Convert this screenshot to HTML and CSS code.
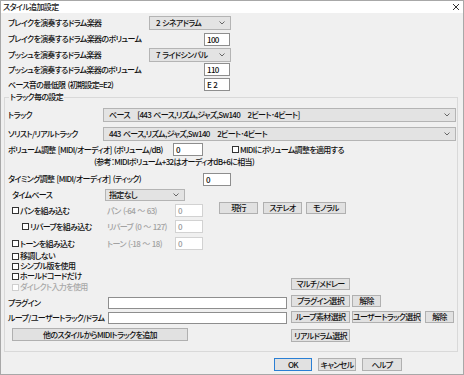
FILE: index.html
```html
<!DOCTYPE html>
<html lang="ja">
  <head>
    <meta charset="UTF-8" />
    <title>スタイル追加設定</title>
    <link rel="stylesheet" href="styles.css">
  </head>
  <body>
    <div class="window">
      <div class="titlebar">
        <span class="title">スタイル追加設定</span>
        <svg class="close" width="8" height="8" viewBox="0 0 8 8"><path d="M1 1 L7 7 M7 1 L1 7" stroke="#333" stroke-width="1" fill="none"/></svg>
      </div>

      <div class="top">
        <div class="row h16">
          <span class="lbl">ブレイクを演奏するドラム楽器</span>
          <span class="select drum">2 シネアドラム<svg class="chev" width="6" height="4" viewBox="0 0 6 4"><path d="M0.5 0.5 L3 3 L5.5 0.5" stroke="#666" fill="none"/></svg></span>
        </div>
        <div class="row h16">
          <span class="lbl">ブレイクを演奏するドラム楽器のボリューム</span>
          <span class="input small">100</span>
        </div>
        <div class="row h15">
          <span class="lbl">プッシュを演奏するドラム楽器</span>
          <span class="select drum">7 ライドシンバル<svg class="chev" width="6" height="4" viewBox="0 0 6 4"><path d="M0.5 0.5 L3 3 L5.5 0.5" stroke="#666" fill="none"/></svg></span>
        </div>
        <div class="row h15">
          <span class="lbl">プッシュを演奏するドラム楽器のボリューム</span>
          <span class="input small">110</span>
        </div>
        <div class="row h15">
          <span class="lbl">ベース音の最低限 (初期設定=E2)</span>
          <span class="input small">E 2</span>
        </div>
      </div>

      <fieldset class="group">
        <legend>トラック毎の設定</legend>

        <div class="row h15">
          <span class="lbl w95">トラック</span>
          <span class="select wide">ベース　[443 ベース,リズム,ジャズ,Sw140　2ビート･4ビート]<svg class="chev" width="6" height="4" viewBox="0 0 6 4"><path d="M0.5 0.5 L3 3 L5.5 0.5" stroke="#666" fill="none"/></svg></span>
        </div>
        <div class="row h15 mt4">
          <span class="lbl w95">ソリスト/リアルトラック</span>
          <span class="select wide">443 ベース,リズム,ジャズ,Sw140　2ビート･4ビート<svg class="chev" width="6" height="4" viewBox="0 0 6 4"><path d="M0.5 0.5 L3 3 L5.5 0.5" stroke="#666" fill="none"/></svg></span>
        </div>
        <div class="row h15 mt1">
          <span class="lbl w165">ボリューム調整 [MIDI/オーディオ] (ボリューム/dB)</span>
          <span class="input w30">0</span>
          <span class="check midi"><i class="box"></i>MIDIにボリューム調整を適用する</span>
        </div>
        <div class="row h10 note">(参考：MIDIボリューム+32はオーディオdB+6に相当)</div>
        <div class="row h16 mt4">
          <span class="lbl w195">タイミング調整 [MIDI/オーディオ] (ティック)</span>
          <span class="input w28">0</span>
        </div>
        <div class="row h14 mt1">
          <span class="lbl w97 in4">タイムベース</span>
          <span class="select base">指定なし<svg class="chev" width="6" height="4" viewBox="0 0 6 4"><path d="M0.5 0.5 L3 3 L5.5 0.5" stroke="#666" fill="none"/></svg></span>
        </div>

        <div class="row h15 mt1">
          <span class="check col1 in4"><i class="box"></i>パンを組み込む</span>
          <span class="dim col2">パン (-64 ～ 63)</span>
          <span class="input dis w28">0</span>
          <span class="btn w39 ml16 up">現行</span>
          <span class="btn w39 ml5 up">ステレオ</span>
          <span class="btn w40 ml4 up">モノラル</span>
        </div>
        <div class="row h15 mt1">
          <span class="check col1 in14"><i class="box"></i>リバーブを組み込む</span>
          <span class="dim col2">リバーブ (0 ～ 127)</span>
          <span class="input dis w28">0</span>
        </div>
        <div class="row h15 mt2">
          <span class="check col1 in4"><i class="box"></i>トーンを組み込む</span>
          <span class="dim col2">トーン (-18 ～ 18)</span>
          <span class="input dis w28">0</span>
        </div>

        <div class="lower">
          <div class="left">
            <div class="row h10"><span class="check in4"><i class="box"></i>移調しない</span></div>
            <div class="row h10"><span class="check in4"><i class="box"></i>シンプル版を使用</span></div>
            <div class="row h10"><span class="check in4"><i class="box"></i>ホールドコードだけ</span></div>
            <div class="row h12"><span class="check in4 off"><i class="box"></i>ダイレクト入力を使用</span></div>
            <div class="row h14 mt3">
              <span class="lbl w100">プラグイン</span>
              <span class="input grow"></span>
            </div>
            <div class="row h14 mt1">
              <span class="lbl w100">ループ/ユーザートラック/ドラム</span>
              <span class="input grow"></span>
            </div>
            <div class="row h15 mt2">
              <span class="btn other">他のスタイルからMIDIトラックを追加</span>
            </div>
          </div>
          <div class="right">
            <div class="btnrow first"><span class="btn w59">マルチ/メドレー</span></div>
            <div class="btnrow mt5"><span class="btn w59">プラグイン選択</span><span class="btn w29 ml2">解除</span></div>
            <div class="btnrow mt4"><span class="btn w59">ループ素材選択</span><span class="btn w69 ml2">ユーザートラック選択</span><span class="btn w29 ml4">解除</span></div>
            <div class="btnrow mt6"><span class="btn w59 h13">リアルドラム選択</span></div>
          </div>
        </div>
      </fieldset>

      <div class="actions">
        <span class="btn w38 ok">OK</span>
        <span class="btn w38 ml6">キャンセル</span>
        <span class="btn w40 ml6">ヘルプ</span>
      </div>
    </div>
  </body>
</html>
```

FILE: styles.css
```css
* {
  box-sizing: border-box;
}

html,
body {
  margin: 0;
  padding: 0;
}

body {
  font-family: "Noto Sans CJK JP", "Noto Sans", sans-serif;
  font-size: 8px;
  font-weight: 500;
  line-height: 10px;
  font-feature-settings: "palt";
  letter-spacing: -0.65px;
  word-spacing: 1px;
  color: #111;
  background: #fff;
}

.window {
  width: 464px;
  height: 375px;
  border: 1px solid #a8a8a8;
  background: #f0f0f0;
}

.titlebar {
  height: 12px;
  background: #fff;
  display: flex;
  align-items: center;
  justify-content: space-between;
  padding: 0 3px 0 2px;
  color: #222;
}

.close {
  display: block;
}

.top {
  width: 223px;
  margin-left: 7px;
  padding-top: 2px;
}

.row {
  display: flex;
  align-items: center;
  white-space: nowrap;
}

.top .row {
  justify-content: space-between;
}

.h10 { height: 10px; }
.h12 { height: 12px; }
.h14 { height: 14px; }
.h15 { height: 15px; }
.h16 { height: 16px; }

.mt1 { margin-top: 1px; }
.mt2 { margin-top: 2px; }
.mt3 { margin-top: 3px; }
.mt4 { margin-top: 4px; }
.mt5 { margin-top: 5px; }
.mt6 { margin-top: 6px; }

.ml2 { margin-left: 2px; }
.ml4 { margin-left: 4px; }
.ml5 { margin-left: 5px; }
.ml6 { margin-left: 6px; }
.ml16 { margin-left: 16px; }

.in4 { padding-left: 4px; }
.in14 { padding-left: 14px; }

.lbl {
  flex: none;
}

.w28 { width: 28px; }
.w29 { width: 29px; }
.w30 { width: 30px; }
.w38 { width: 38px; }
.w39 { width: 39px; }
.w40 { width: 40px; }
.w59 { width: 59px; }
.w69 { width: 69px; }
.w95 { width: 95px; }
.w97 { width: 97px; }
.w100 { width: 100px; }
.w165 { width: 165px; }
.w195 { width: 195px; }

.select {
  height: 14px;
  border: 1px solid #b4b4b4;
  background: #e3e3e3;
  display: flex;
  align-items: center;
  justify-content: space-between;
  padding: 0 5px 0 5px;
}

.chev {
  flex: none;
  display: block;
}

.select.drum {
  width: 82px;
  padding-left: 6px;
}

.select.wide {
  flex: 1;
}

.select.base {
  width: 80px;
  height: 12px;
  padding-left: 3px;
}

.input {
  height: 13px;
  border: 1px solid #8e8e8e;
  background: #fff;
  padding-left: 2px;
  line-height: 11px;
}

.input.small {
  width: 26px;
  margin-right: 1px;
}

.input.dis {
  border-color: #d2d2d2;
  color: #9a9a9a;
}

.input.grow {
  flex: 1;
  height: 12px;
}

.check {
  display: flex;
  align-items: center;
}

.box {
  width: 7px;
  height: 7px;
  border: 1px solid #333;
  background: #fff;
  margin-right: 1px;
  flex: none;
}

.check.off {
  color: #a8a8a8;
}

.check.off .box {
  border-color: #cfcfcf;
}

.check.midi {
  margin-left: 29px;
}

.note {
  padding-left: 86px;
}

.col1 {
  width: 99px;
}

.col2 {
  width: 68px;
}

.dim {
  color: #a2a2a2;
}

.btn {
  height: 12px;
  border: 1px solid #b0b0b0;
  background: #e1e1e1;
  display: flex;
  align-items: center;
  justify-content: center;
  flex: none;
  white-space: nowrap;
}

.btn.up {
  align-self: flex-start;
  margin-top: -1px;
}

.btn.h13 {
  height: 13px;
}

.btn.other {
  width: 176px;
  height: 13px;
  margin-left: 4px;
}

.group {
  margin: 0 5px 0 3px;
  padding: 5px 1px 9px 3px;
  border: 1px solid #d9d9d9;
  min-width: 0;
}

.group legend {
  padding: 0 1px;
  margin-left: 1px;
  line-height: 10px;
}

.lower {
  display: flex;
}

.left {
  width: 279px;
}

.right {
  margin-left: 4px;
}

.btnrow {
  display: flex;
}

.btnrow.first {
  margin-top: 27px;
}

.actions {
  display: flex;
  justify-content: flex-end;
  padding-right: 61px;
  margin-top: 6px;
}

.actions .btn {
  height: 13px;
}

.btn.ok {
  border-color: #2a7fd4;
}
```
